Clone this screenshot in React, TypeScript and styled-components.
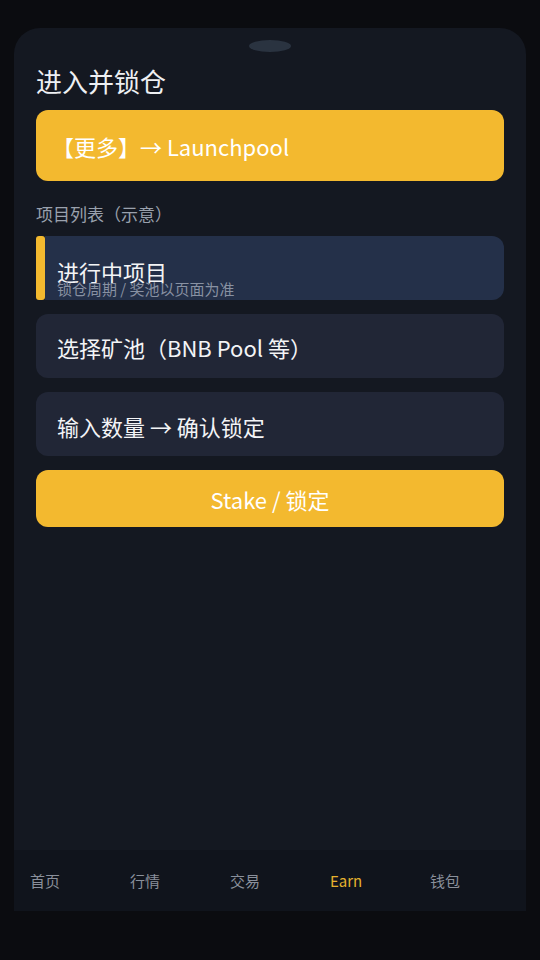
import styled, { createGlobalStyle } from "styled-components";

const GlobalStyle = createGlobalStyle`
  html, body {
    margin: 0;
    padding: 0;
    background: #0b0c10;
  }
  body {
    font-family: "Noto Sans CJK SC", "Noto Sans", sans-serif;
    color: #f3f4f6;
  }
`;

const Page = styled.div`
  width: 540px;
  height: 960px;
  padding: 28px 14px 0;
  box-sizing: border-box;
`;

const Phone = styled.div`
  height: 883px;
  background: #141821;
  border-radius: 26px 26px 0 0;
  display: flex;
  flex-direction: column;
  overflow: hidden;
`;

const Main = styled.div`
  flex: 1;
  padding: 12px 22px 0;
  display: flex;
  flex-direction: column;
`;

const Notch = styled.div`
  width: 42px;
  height: 12px;
  border-radius: 50%;
  background: #2a3340;
  align-self: center;
`;

const Title = styled.h1`
  margin: 10px 0 11px;
  font-size: 26px;
  font-weight: 400;
  color: #eef0f3;
`;

const Banner = styled.div`
  height: 71px;
  box-sizing: border-box;
  padding: 1px 16px 0;
  display: flex;
  align-items: center;
  background: #f3b92f;
  border-radius: 12px;
  font-size: 22px;
  color: #ffffff;
`;

const SectionLabel = styled.div`
  margin: 20px 0 10px;
  font-size: 17px;
  color: #9aa1ad;
`;

const List = styled.div`
  display: flex;
  flex-direction: column;
  gap: 14px;
`;

const ActiveRow = styled.div`
  display: flex;
  height: 64px;
`;

const Accent = styled.div`
  width: 9px;
  flex-shrink: 0;
  border-radius: 3px;
  background: #f3b92f;
`;

const Card = styled.div<{ $active?: boolean; $top: number }>`
  flex-grow: ${(p) => (p.$active ? 1 : 0)};
  height: 64px;
  flex-shrink: 0;
  box-sizing: border-box;
  padding: ${(p) => p.$top}px 20px 0 ${(p) => (p.$active ? 12 : 21)}px;
  background: ${(p) => (p.$active ? "#243049" : "#212636")};
  border-radius: ${(p) => (p.$active ? "0 12px 12px 0" : "12px")};
`;

const CardTitle = styled.div`
  font-size: 22px;
  color: #f3f4f6;
`;

const CardSub = styled.div`
  margin-top: -9px;
  font-size: 15px;
  color: #8891a2;
`;

const StakeButton = styled.button`
  height: 57px;
  flex-shrink: 0;
  border: none;
  border-radius: 12px;
  background: #f3b92f;
  color: #ffffff;
  font-family: inherit;
  font-size: 22px;
  padding: 0;
`;

const Nav = styled.nav`
  height: 61px;
  padding: 0 16px 1px;
  box-sizing: border-box;
  background: #10141c;
  display: grid;
  grid-template-columns: repeat(5, 100px);
  align-items: center;
`;

const NavItem = styled.div<{ $active?: boolean }>`
  font-size: 15px;
  color: ${(p) => (p.$active ? "#e6b22e" : "#8a909b")};
`;

const tabs = ["首页", "行情", "交易", "Earn", "钱包"];

export default function App() {
  return (
    <>
      <GlobalStyle />
      <Page>
        <Phone>
          <Main>
            <Notch />
            <Title>进入并锁仓</Title>
            <Banner>【更多】→ Launchpool</Banner>
            <SectionLabel>项目列表（示意）</SectionLabel>
            <List>
              <ActiveRow>
                <Accent />
                <Card $active $top={19}>
                  <CardTitle>进行中项目</CardTitle>
                  <CardSub>锁仓周期 / 奖池以页面为准</CardSub>
                </Card>
              </ActiveRow>
              <Card $top={17}>
                <CardTitle>选择矿池（BNB Pool 等）</CardTitle>
              </Card>
              <Card $top={18}>
                <CardTitle>输入数量 → 确认锁定</CardTitle>
              </Card>
              <StakeButton>Stake / 锁定</StakeButton>
            </List>
          </Main>
          <Nav>
            {tabs.map((t) => (
              <NavItem key={t} $active={t === "Earn"}>
                {t}
              </NavItem>
            ))}
          </Nav>
        </Phone>
      </Page>
    </>
  );
}
